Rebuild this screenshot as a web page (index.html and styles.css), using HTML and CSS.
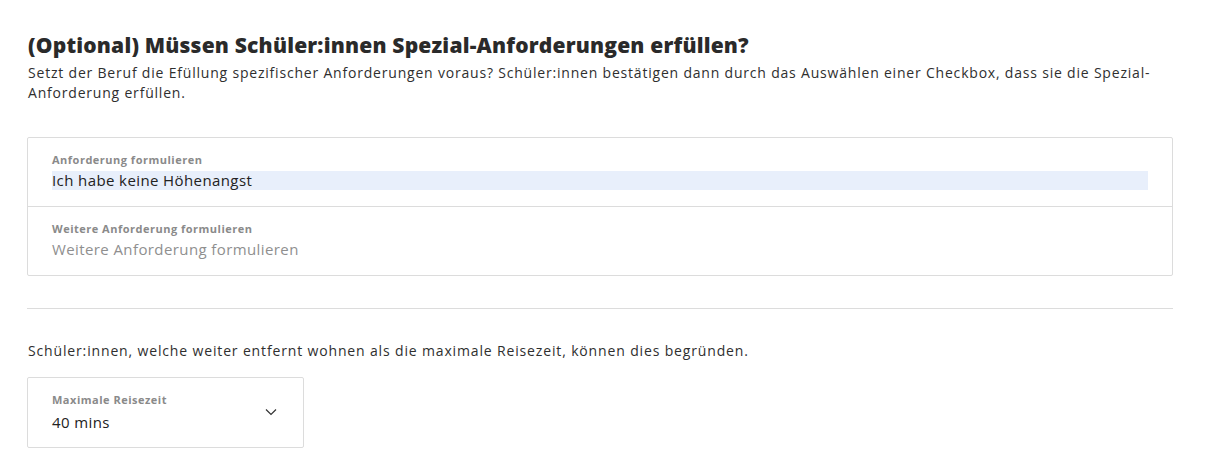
FILE: index.html
```html
<!DOCTYPE html>
<html lang="de">
<head>
<meta charset="utf-8">
<link rel="stylesheet" href="styles.css">
</head>
<body>
<main class="page">
  <section class="section">
    <h2 class="title">(Optional) Müssen Schüler:innen Spezial-Anforderungen erfüllen?</h2>
    <p class="desc">Setzt der Beruf die Efüllung spezifischer Anforderungen voraus? Schüler:innen bestätigen dann durch das Auswählen einer Checkbox, dass sie die Spezial-Anforderung erfüllen.</p>
    <div class="fieldgroup">
      <div class="field">
        <label class="label">Anforderung formulieren</label>
        <div class="input filled">Ich habe keine Höhenangst</div>
      </div>
      <div class="field">
        <label class="label">Weitere Anforderung formulieren</label>
        <div class="input placeholder">Weitere Anforderung formulieren</div>
      </div>
    </div>
  </section>
  <hr class="sep">
  <section class="section travel">
    <p class="text">Schüler:innen, welche weiter entfernt wohnen als die maximale Reisezeit, können dies begründen.</p>
    <div class="select">
      <div class="select-body">
        <label class="label">Maximale Reisezeit</label>
        <div class="input">40 mins</div>
      </div>
      <svg class="chev" width="12" height="8" viewBox="0 0 12 8"><path d="M1 1.5 L6 6.5 L11 1.5" fill="none" stroke="#333" stroke-width="1.2"/></svg>
    </div>
  </section>
</main>
</body>
</html>
```
FILE: styles.css
```css
* { box-sizing: border-box; }
body {
  margin: 0;
  background: #fff;
  font-family: "Open Sans", "Lato", sans-serif;
  color: #2b2b2b;
}
.page {
  width: 1146px;
  margin-left: 27px;
  padding-top: 31px;
}
.title {
  margin: 0 0 0 1px;
  font-size: 21px;
  line-height: 28px;
  font-weight: 800;
  letter-spacing: 0.2px;
  color: #2a2a2a;
}
.desc {
  margin: 4px 0 0 1px;
  font-size: 14px;
  line-height: 20px;
  letter-spacing: 0.8px;
  color: #2f2f2f;
  padding-right: 10px;
}
.fieldgroup {
  margin-top: 34px;
  border: 1px solid #dcdcdc;
  border-radius: 2px;
}
.field {
  height: 68px;
  padding: 15px 24px 0 24px;
}
.field + .field {
  height: 69px;
  border-top: 1px solid #dcdcdc;
}
.label {
  display: block;
  font-size: 11px;
  line-height: 14px;
  font-weight: 700;
  letter-spacing: 0.5px;
  color: #8a8a8a;
}
.input {
  margin-top: 4px;
  font-size: 15px;
  line-height: 19px;
  letter-spacing: 0.4px;
  color: #222;
}
.input.filled { background: #e8effb; }
.input.placeholder { color: #8f8f8f; }
.sep {
  margin: 32px 0 0 0;
  border: 0;
  border-top: 1px solid #dcdcdc;
}
.text {
  margin: 32px 0 0 1px;
  font-size: 14px;
  line-height: 20px;
  letter-spacing: 0.85px;
  color: #2f2f2f;
}
.select {
  margin-top: 16px;
  width: 277px;
  height: 71px;
  border: 1px solid #dcdcdc;
  border-radius: 2px;
  display: flex;
  align-items: center;
  justify-content: space-between;
  padding: 0 26px 0 24px;
}
.select .input { margin-top: 6px; }
.chev { margin-bottom: 2px; }
```
